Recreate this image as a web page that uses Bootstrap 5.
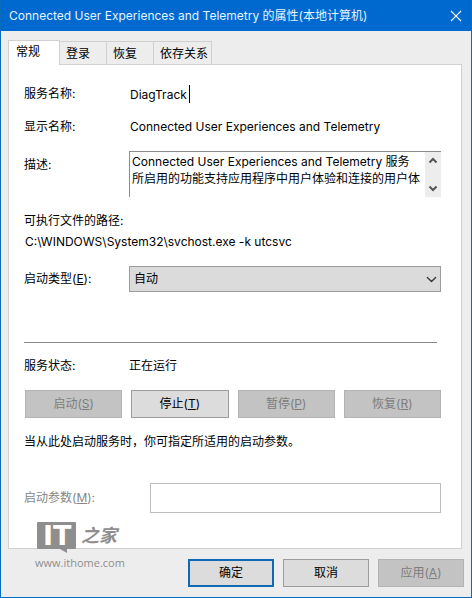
<!DOCTYPE html>
<html lang="zh-CN">
<head>
<meta charset="utf-8">
<meta name="viewport" content="width=device-width, initial-scale=1">
<title>Connected User Experiences and Telemetry 的属性(本地计算机)</title>
<link rel="stylesheet" href="https://cdn.jsdelivr.net/npm/bootstrap@5.3.0/dist/css/bootstrap.min.css">
<style>
  :root { --edge: #0a6cbd; --title: #0069d0; --face: #ededed; --line: #d0d0d0; }
  body { font: 12px/16px Inter, "Noto Sans CJK SC", sans-serif; color: #000; background: var(--face); }
  .dialog { border: 1px solid var(--edge); border-top: 0; min-height: 100vh; }
  .titlebar { background: var(--title); color: #e4f3ff; height: 31px; padding: 0 8px; }
  .titlebar h1 { font-size: 12px; line-height: 16px; }
  .titlebar button, .scroller button { background: none; border: 0; padding: 0; color: inherit; }
  .work { padding: 9px 7px 10px 7px; }
  .sheet-tabs { --bs-nav-tabs-border-width: 0; border: 0; }
  .sheet-tabs .nav-link { font-size: 12px; line-height: 16px; height: 23px; color: #000; background: var(--face);
    border: 1px solid var(--line); border-left: 0; border-bottom: 0; border-radius: 0; margin: 0; padding: 2px 16px 0 6px; }
  .sheet-tabs .nav-link.first-tab { height: 25px; background: #fff; border-left: 1px solid var(--line);
    padding: 0 19px 2px 7px; margin-bottom: -1px; position: relative; }
  .sheet-tabs .nav-link.last-tab { padding-right: 3px; }
  .sheet { background: #fff; border: 1px solid var(--line); padding: 20px 20px 35px 15px; margin-right: 2px; }
  .field { display: grid; grid-template-columns: 105px 1fr; align-items: center; }
  .name-box { width: 60px; height: 18px; border: 0; border-right: 1px solid #000; padding: 0; outline: 0; margin-left: 1px; }
  .display-name { margin-left: 1px; }
  .desc-label { align-self: start; padding-top: 6px; }
  .desc { border: 1px solid #8c8c8c; border-right: 0; border-bottom: 0; height: 46px; }
  .desc textarea { border: 0; padding: 1px 0 0 2px; resize: none; overflow: hidden; white-space: pre; line-height: 17px; outline: 0; min-width: 0; }
  .scroller { width: 16px; background: var(--face); color: #555; padding: 4px 0; }
  .exe-path { margin-top: 5px; padding-left: 1px; }
  .type-select { height: 26px; font-size: 12px; line-height: 16px; border: 1px solid #9d9d9d; border-radius: 0; color: #000; padding: 0 24px 0 4px;
    background-color: #dbdbdb; background-position: right 3px center; background-size: 11px 11px; }
  .rule { border-top: 1px solid #888; margin: 50px 4px 15px 0; }
  .actions { display: grid; grid-template-columns: repeat(4, 1fr); gap: 9px; padding: 0 0 0 1px; }
  .btn-win { --bs-btn-bg: #dcdcdc; --bs-btn-border-color: #9c9c9c; --bs-btn-color: #000; --bs-btn-border-radius: 0;
    --bs-btn-disabled-bg: #c3c3c3; --bs-btn-disabled-border-color: #b3b3b3; --bs-btn-disabled-color: #7d7d7d; --bs-btn-disabled-opacity: 1;
    --bs-btn-padding-x: 0; --bs-btn-padding-y: 5px; --bs-btn-font-size: 12px; --bs-btn-line-height: 16px; }
  .foot .btn-win { width: 86px; }
  .btn-main { border: 2px solid #1069b4; padding: 4px 0; }
  .args { grid-template-columns: 126px 1fr; color: #868686; margin-top: 33px; }
  .args input { height: 30px; border: 1px solid #bdbdbd; border-radius: 0; font-size: 12px; }
  .args input:disabled { background: #fff; }
  .foot { gap: 9px; margin-top: 10px; }
  .watermark { left: 34px; bottom: 26px; color: #8e8e8e; }
</style>
<script src="https://cdn.jsdelivr.net/npm/bootstrap@5.3.0/dist/js/bootstrap.bundle.min.js"></script>
</head>
<body>
<main class="dialog position-relative">
  <header class="titlebar d-flex align-items-center justify-content-between">
    <h1 class="m-0 fw-normal">Connected User Experiences and Telemetry 的属性(本地计算机)</h1>
    <button type="button" class="d-flex" aria-label="关闭"><svg width="14" height="12" viewBox="0 0 14 12" fill="none" stroke="#fff" stroke-width="1.1"><path d="M2 1l10 10M12 1L2 11"/></svg></button>
  </header>
  <div class="work">
    <div class="nav nav-tabs sheet-tabs align-items-end" role="tablist">
      <button type="button" class="nav-link first-tab" role="tab" aria-selected="true">常规</button>
      <button type="button" class="nav-link" role="tab">登录</button>
      <button type="button" class="nav-link" role="tab">恢复</button>
      <button type="button" class="nav-link last-tab" role="tab">依存关系</button>
    </div>
    <form class="sheet">
      <div class="field">
        <label for="svc">服务名称:</label>
        <input id="svc" class="name-box" value="DiagTrack" readonly>
      </div>
      <div class="field mt-3"><span>显示名称:</span><span class="display-name">Connected User Experiences and Telemetry</span></div>
      <div class="field mt-3">
        <label for="desc" class="desc-label">描述:</label>
        <div class="desc d-flex">
          <textarea id="desc" class="flex-grow-1" readonly>Connected User Experiences and Telemetry 服务
所启用的功能支持应用程序中用户体验和连接的用户体</textarea>
          <div class="scroller d-flex flex-column justify-content-between align-items-center">
            <button type="button" class="d-flex" aria-label="向上"><svg width="10" height="9" viewBox="0 0 10 9" fill="none" stroke="currentColor" stroke-width="2"><path d="M1.5 6.5L5 3l3.500 3.500"/></svg></button>
            <button type="button" class="d-flex" aria-label="向下"><svg width="10" height="9" viewBox="0 0 10 9" fill="none" stroke="currentColor" stroke-width="2"><path d="M1.500 2.500L5 6l3.500-3.500"/></svg></button>
          </div>
        </div>
      </div>
      <div class="mt-3">可执行文件的路径:</div>
      <div class="exe-path">C:\WINDOWS\System32\svchost.exe -k utcsvc</div>
      <div class="field mt-3">
        <label for="type">启动类型(<u>E</u>):</label>
        <select id="type" class="form-select type-select"><option>自动</option></select>
      </div>
      <div class="rule"></div>
      <div class="field"><span>服务状态:</span><span>正在运行</span></div>
      <div class="actions mt-3">
        <button type="button" class="btn btn-win" disabled>启动(<u>S</u>)</button>
        <button type="button" class="btn btn-win">停止(<u>T</u>)</button>
        <button type="button" class="btn btn-win" disabled>暂停(<u>P</u>)</button>
        <button type="button" class="btn btn-win" disabled>恢复(<u>R</u>)</button>
      </div>
      <div class="mt-3">当从此处启动服务时，你可指定所适用的启动参数。</div>
      <div class="field args">
        <label for="args">启动参数(<u>M</u>):</label>
        <input id="args" type="text" class="form-control" disabled>
      </div>
    </form>
    <div class="foot d-flex justify-content-end">
      <button type="button" class="btn btn-win btn-main">确定</button>
      <button type="button" class="btn btn-win">取消</button>
      <button type="button" class="btn btn-win" disabled>应用(<u>A</u>)</button>
    </div>
  </div>
  <svg class="watermark position-absolute" width="92" height="50" viewBox="0 0 92 50" fill="currentColor" aria-label="IT之家">
    <path d="M3 1h37a1 1 0 0 1 1 1v25a1 1 0 0 1-1 1h-8v4l-7-4H3a1 1 0 0 1-1-1V2a1 1 0 0 1 1-1z"/>
    <text x="8" y="24" font-family="DejaVu Sans" font-weight="700" font-size="27" fill="#fff">IT</text>
    <text x="46" y="21" font-family="Noto Sans CJK SC" font-style="italic" font-weight="700" font-size="18">之家</text>
    <text x="0" y="46" font-family="Open Sans" font-size="11">www.ithome.com</text>
  </svg>
</main>
</body>
</html>
